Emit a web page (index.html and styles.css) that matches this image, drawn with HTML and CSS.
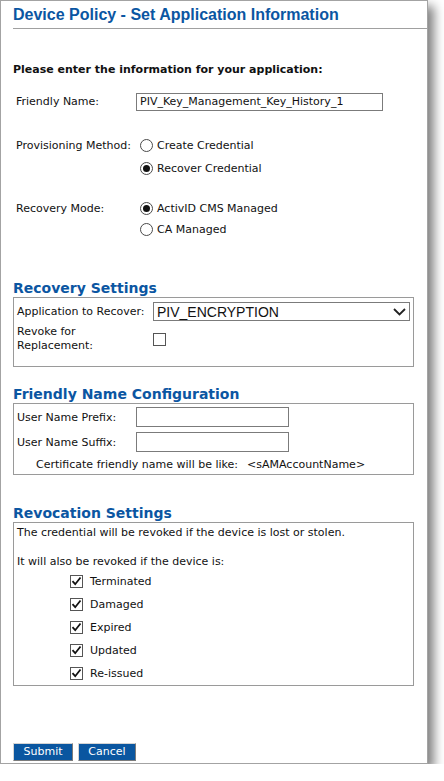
FILE: index.html
```html
<!DOCTYPE html>
<html>
<head>
<meta charset="utf-8">
<title>Device Policy - Set Application Information</title>
<link rel="stylesheet" href="styles.css">
</head>
<body>
<div class="page">
  <h1 class="title">Device Policy - Set Application Information</h1>
  <div class="content">
    <p class="intro">Please enter the information for your application:</p>

    <div class="row row-friendly">
      <div class="label">Friendly Name:</div>
      <div class="field"><div class="textbox tb-friendly">PIV_Key_Management_Key_History_1</div></div>
    </div>

    <div class="row row-prov">
      <div class="label">Provisioning Method:</div>
      <div class="field options">
        <div class="option"><span class="radio"></span><span>Create Credential</span></div>
        <div class="option"><span class="radio checked"></span><span>Recover Credential</span></div>
      </div>
    </div>

    <div class="row row-mode">
      <div class="label">Recovery Mode:</div>
      <div class="field options">
        <div class="option"><span class="radio checked"></span><span>ActivID CMS Managed</span></div>
        <div class="option"><span class="radio"></span><span>CA Managed</span></div>
      </div>
    </div>

    <h2 class="section h-recovery">Recovery Settings</h2>
    <div class="box box-recovery">
      <div class="brow">
        <div class="blabel w136">Application to Recover:</div>
        <div class="select">
          <span>PIV_ENCRYPTION</span>
          <svg class="chev" width="13" height="8" viewBox="0 0 13 8"><path d="M1 1 L6.5 6.5 L12 1" fill="none" stroke="#222" stroke-width="1.8"/></svg>
        </div>
      </div>
      <div class="brow brow-revoke">
        <div class="blabel w136 twoline">Revoke for<br>Replacement:</div>
        <span class="checkbox"></span>
      </div>
    </div>

    <h2 class="section h-fnc">Friendly Name Configuration</h2>
    <div class="box box-fnc">
      <div class="brow">
        <div class="blabel w119">User Name Prefix:</div>
        <div class="textbox tb-short"></div>
      </div>
      <div class="brow brow-suffix">
        <div class="blabel w119">User Name Suffix:</div>
        <div class="textbox tb-short"></div>
      </div>
      <div class="cert"><span>Certificate friendly name will be like:</span><span class="cert-val">&lt;sAMAccountName&gt;</span></div>
    </div>

    <h2 class="section h-revoc">Revocation Settings</h2>
    <div class="box box-revoc">
      <p class="rtext">The credential will be revoked if the device is lost or stolen.</p>
      <p class="rtext rtext2">It will also be revoked if the device is:</p>
      <ul class="checks">
        <li><span class="checkbox checked"><svg width="13" height="13" viewBox="0 0 13 13"><path d="M2.5 6.2 L5.2 9.2 L10.5 2.5" fill="none" stroke="#111" stroke-width="1.8"/></svg></span>Terminated</li>
        <li><span class="checkbox checked"><svg width="13" height="13" viewBox="0 0 13 13"><path d="M2.5 6.2 L5.2 9.2 L10.5 2.5" fill="none" stroke="#111" stroke-width="1.8"/></svg></span>Damaged</li>
        <li><span class="checkbox checked"><svg width="13" height="13" viewBox="0 0 13 13"><path d="M2.5 6.2 L5.2 9.2 L10.5 2.5" fill="none" stroke="#111" stroke-width="1.8"/></svg></span>Expired</li>
        <li><span class="checkbox checked"><svg width="13" height="13" viewBox="0 0 13 13"><path d="M2.5 6.2 L5.2 9.2 L10.5 2.5" fill="none" stroke="#111" stroke-width="1.8"/></svg></span>Updated</li>
        <li><span class="checkbox checked"><svg width="13" height="13" viewBox="0 0 13 13"><path d="M2.5 6.2 L5.2 9.2 L10.5 2.5" fill="none" stroke="#111" stroke-width="1.8"/></svg></span>Re-issued</li>
      </ul>
    </div>

    <div class="buttons">
      <button class="btn btn-submit">Submit</button>
      <button class="btn btn-cancel">Cancel</button>
    </div>
  </div>
</div>
</body>
</html>
```
FILE: styles.css
```css
html, body {
  margin: 0;
  padding: 0;
  background: #ffffff;
}

body {
  font-family: "DejaVu Sans", Verdana, sans-serif;
  font-size: 11px;
  color: #111111;
}

.page {
  box-sizing: border-box;
  width: 428px;
  border: 1px solid #a3a3a3;
  background: #ffffff;
  box-shadow: 6px 6px 10px rgba(0, 0, 0, 0.5);
  padding-bottom: 2px;
}

.title {
  margin: 0 0 0 12px;
  padding: 5px 0 4px 0;
  height: 18px;
  line-height: 18px;
  font-family: "Liberation Sans", Arial, sans-serif;
  font-size: 16px;
  font-weight: bold;
  color: #0b56a2;
  border-bottom: 1px solid #a0a0a0;
}

.content {
  padding: 0 13px 0 12px;
}

.intro {
  margin: 34px 0 0 0;
  line-height: 14px;
  font-weight: bold;
}

.row {
  display: flex;
  padding-left: 3px;
}

.label {
  width: 120px;
  flex: none;
}

.row-friendly {
  margin-top: 16px;
}
.row-friendly .label {
  line-height: 18px;
}

.textbox {
  box-sizing: border-box;
  border: 1px solid #7b7b7b;
  background: #fff;
}

.tb-friendly {
  width: 247px;
  height: 18px;
  line-height: 16px;
  padding-left: 3px;
}

.row-prov {
  margin-top: 23px;
}
.row-prov .label,
.row-prov .option {
  line-height: 23px;
  height: 23px;
}

.row-mode {
  margin-top: 18px;
}
.row-mode .label,
.row-mode .option {
  line-height: 21px;
  height: 21px;
}

.options {
  display: flex;
  flex-direction: column;
}

.option {
  display: flex;
  align-items: center;
  gap: 4px;
  padding-left: 4px;
}

.radio {
  box-sizing: border-box;
  width: 13px;
  height: 13px;
  border: 1px solid #4a4a4a;
  border-radius: 50%;
  background: #fff;
  display: flex;
  align-items: center;
  justify-content: center;
  flex: none;
}

.radio.checked::after {
  content: "";
  width: 7px;
  height: 7px;
  border-radius: 50%;
  background: #111;
}

.section {
  margin: 0;
  height: 17px;
  line-height: 17px;
  font-size: 14px;
  font-weight: bold;
  color: #0b56a2;
}

.h-recovery { margin-top: 40px; }
.h-fnc { margin-top: 19px; }
.h-revoc { margin-top: 30px; }

.box {
  border: 1px solid #9a9a9a;
  padding-left: 3px;
  padding-right: 3px;
}

.box-recovery {
  padding-top: 4px;
  padding-bottom: 13px;
}

.brow {
  display: flex;
  align-items: center;
}

.blabel {
  flex: none;
}
.w136 { width: 136px; }
.w119 { width: 119px; }

.select {
  box-sizing: border-box;
  flex: 1;
  height: 19px;
  border: 1px solid #7b7b7b;
  display: flex;
  align-items: center;
  justify-content: space-between;
  padding: 0 3px 0 3px;
  font-family: "Liberation Sans", Arial, sans-serif;
  font-size: 14px;
  color: #111;
}

.chev {
  display: block;
}

.brow-revoke {
  margin-top: 4px;
}

.twoline {
  line-height: 14px;
}

.checkbox {
  box-sizing: border-box;
  width: 13px;
  height: 13px;
  border: 1px solid #555;
  background: #fff;
  flex: none;
  display: inline-flex;
  align-items: center;
  justify-content: center;
  position: relative;
}

.checkbox.checked svg {
  position: absolute;
  left: -1px;
  top: -1px;
}

.box-fnc {
  padding-top: 3px;
  padding-bottom: 1px;
}

.tb-short {
  width: 153px;
  height: 20px;
}

.brow-suffix {
  margin-top: 5px;
}

.cert {
  margin-top: 5px;
  line-height: 16px;
  padding-left: 19px;
}

.cert-val {
  margin-left: 9px;
}

.box-revoc {
  padding-top: 3px;
  padding-bottom: 0;
}

.rtext {
  margin: 0;
  line-height: 14px;
}

.rtext2 {
  margin-top: 15px;
}

.checks {
  list-style: none;
  margin: 0;
  padding: 1px 0 0 53px;
}

.checks li {
  height: 23px;
  line-height: 23px;
  display: flex;
  align-items: center;
  gap: 7px;
}

.buttons {
  margin-top: 57px;
  display: flex;
  gap: 5px;
}

.btn {
  box-sizing: border-box;
  height: 18px;
  padding: 0;
  margin: 0;
  font-family: "DejaVu Sans", Verdana, sans-serif;
  font-size: 11px;
  line-height: 16px;
  color: #ffffff;
  background: #0a56a0;
  border: 1px solid;
  border-color: #d4d4d4 #7c7c7c #7c7c7c #d4d4d4;
}

.btn-submit { width: 60px; }
.btn-cancel { width: 58px; }
```
